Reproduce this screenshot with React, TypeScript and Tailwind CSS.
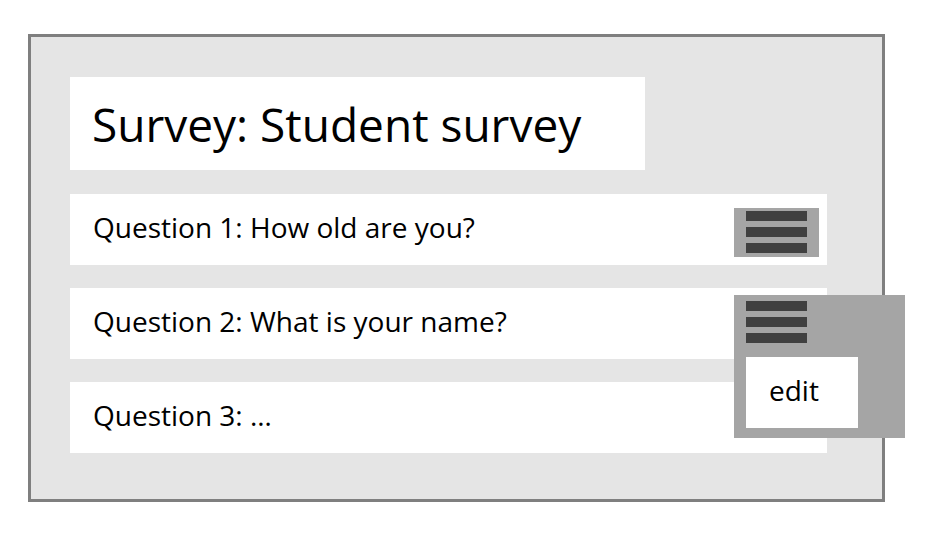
const font = { fontFamily: '"Open Sans", "Noto Sans", sans-serif' };

function Bars({ className = '' }: { className?: string }) {
  return (
    <div className={`flex flex-col gap-[6px] ${className}`}>
      <div className="h-[10px] w-[61px] bg-[#404040]" />
      <div className="h-[10px] w-[61px] bg-[#404040]" />
      <div className="h-[10px] w-[61px] bg-[#404040]" />
    </div>
  );
}

function QuestionRow({ text, handle, className = '', children }: { text: string; handle?: boolean; className?: string; children?: React.ReactNode }) {
  return (
    <div className={`relative flex h-[71px] w-[757px] justify-between bg-white pl-[23px] pr-[8px] ${className}`}>
      <span className="mt-[19px] text-[28px] leading-none text-black">{text}</span>
      {handle && (
        <div className="mt-[14px] flex h-[49px] w-[85px] items-start bg-[#a5a5a5] pl-[12px] pt-[3px]">
          <Bars />
        </div>
      )}
      {children}
    </div>
  );
}

export default function App() {
  return (
    <div className="h-[548px] w-[944px] bg-white pl-[28px] pt-[34px]" style={font}>
      <div className="flex h-[468px] w-[857px] flex-col gap-[23px] border-[3px] border-[#7f7f7f] bg-[#e5e5e5] pl-[39px] pt-[40px]">
        <div className="flex h-[93px] w-[575px] items-center bg-white pl-[22px]">
          <h1 className="text-[46px] leading-none text-black">Survey: Student survey</h1>
        </div>
        <QuestionRow text="Question 1: How old are you?" handle className="mt-[1px]" />
        <QuestionRow text="Question 2: What is your name?">
          <div className="absolute left-[664px] top-[7px] z-10 flex h-[143px] w-[171px] flex-col bg-[#a5a5a5] pl-[12px] pt-[6px]">
            <Bars />
            <div className="mt-[14px] flex h-[71px] w-[112px] bg-white pl-[23px] pt-[19px]">
              <span className="text-[28px] leading-none text-black">edit</span>
            </div>
          </div>
        </QuestionRow>
        <QuestionRow text="Question 3: …" />
      </div>
    </div>
  );
}
